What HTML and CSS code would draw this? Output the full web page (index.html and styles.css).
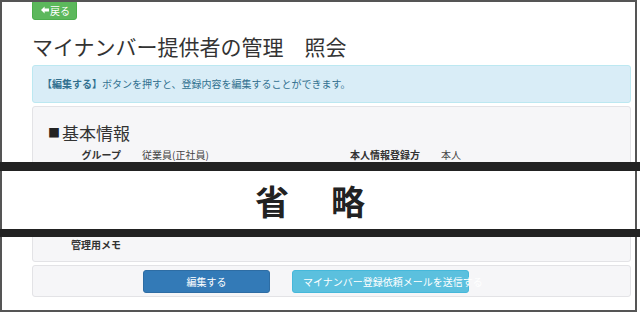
FILE: index.html
```html
<!DOCTYPE html>
<html lang="ja">
<head>
    <meta charset="UTF-8">
    <meta name="viewport" content="width=device-width, initial-scale=1.0">
    <title>マイナンバー提供者の管理 照会</title>
    <link rel="stylesheet" href="styles.css">
</head>
<body>
    <div class="frame">
        <div class="page">
            <a class="btn-back" href="#">
                <svg width="8" height="8" viewBox="0 0 8 8"><path d="M0 4 L3.6 0.4 L3.6 2.6 L8 2.6 L8 5.4 L3.6 5.4 L3.6 7.6 Z" fill="#fff"/></svg>戻る
            </a>
            <h1 class="title">マイナンバー提供者の管理　照会</h1>

            <div class="alert">
                <strong>【編集する】</strong>ボタンを押すと、登録内容を編集することができます。
            </div>

            <div class="panel">
                <h2 class="section">
                    <span class="mark">■</span>基本情報
                </h2>
                <div class="row">
                    <div class="label">グループ</div>
                    <div class="value">従業員(正社員)</div>
                    <div class="label">本人情報登録方</div>
                    <div class="value">本人</div>
                </div>
                <div class="row">
                    <div class="label">氏名</div>
                    <div class="value">山田 太郎</div>
                    <div class="label">氏名(カナ)</div>
                    <div class="value">ヤマダ タロウ</div>
                </div>
                <div class="row">
                    <div class="label">生年月日</div>
                    <div class="value">1980/01/01</div>
                    <div class="label">性別</div>
                    <div class="value">男性</div>
                </div>
                <div class="row">
                    <div class="label">メール</div>
                    <div class="value">yamada@example.com</div>
                    <div class="label">社員番号</div>
                    <div class="value">000123</div>
                </div>
                <div class="row">
                    <div class="label">住所</div>
                    <div class="value">東京都</div>
                    <div class="label">電話番号</div>
                    <div class="value">03-0000-0000</div>
                </div>
                <div class="row">
                    <div class="label">管理用メモ</div>
                    <div class="value"></div>
                </div>
            </div>

            <div class="panel actions">
                <button class="btn btn-primary">編集する</button>
                <button class="btn btn-info">マイナンバー登録依頼メールを送信する</button>
            </div>
        </div>
    </div>

    <div class="omit">
        <span class="omit-text">省　略</span>
    </div>
</body>
</html>
```

FILE: styles.css
```css
body {
    margin: 0;
    font-family: "Noto Sans CJK JP", "Noto Sans", sans-serif;
    background-color: #fff;
    color: #333;
}

.frame {
    position: relative;
    width: 637px;
    height: 312px;
    box-sizing: border-box;
    border: 2px solid #555;
    overflow: hidden;
}

.page {
    padding: 0 4px 0 30px;
}

.btn-back {
    display: flex;
    align-items: center;
    gap: 1px;
    width: fit-content;
    height: 20px;
    margin-top: -2px;
    padding: 0 6px 0 8px;
    box-sizing: border-box;
    background-color: #5cb85c;
    border: 1px solid #4cae4c;
    border-radius: 3px;
    color: #fff;
    font-size: 10px;
    text-decoration: none;
}

.title {
    margin: 13px 0 6px;
    font-size: 21px;
    line-height: 26px;
    font-weight: normal;
    color: #333;
}

.alert {
    margin-bottom: 3px;
    padding: 11px 9px;
    background-color: #d9edf7;
    border: 1px solid #bce8f1;
    border-radius: 3px;
    color: #31708f;
    font-size: 10px;
    line-height: 14px;
}

.panel {
    background-color: #f6f6f8;
    border: 1px solid #e3e3e6;
    border-radius: 3px;
    padding: 15px 15px 7px;
}

.section {
    margin: 0 0 2px;
    font-size: 17px;
    line-height: 22px;
    font-weight: normal;
    color: #333;
}

.section .mark {
    font-size: 12px;
    vertical-align: 2px;
    margin-right: 2px;
    color: #222;
}

.row {
    display: grid;
    grid-template-columns: 73px 184px 73px 1fr;
    column-gap: 21px;
    font-size: 10px;
    line-height: 18px;
    height: 18px;
}

.label {
    text-align: right;
    font-weight: bold;
    white-space: nowrap;
}

.value {
    color: #444;
    white-space: nowrap;
}

.actions {
    margin-top: 3px;
    padding: 4px 0 3px 110px;
    display: flex;
    gap: 22px;
}

.btn {
    height: 23px;
    padding: 0 10px;
    border-radius: 3px;
    color: #fff;
    font-family: inherit;
    font-size: 10px;
    white-space: nowrap;
    text-align: center;
    cursor: pointer;
}

.btn-primary {
    width: 127px;
    background-color: #337ab7;
    border: 1px solid #2e6da4;
}

.btn-info {
    width: 177px;
    text-align: left;
    background-color: #5bc0de;
    border: 1px solid #46b8da;
}

.omit {
    position: absolute;
    top: 162px;
    left: 0;
    width: 640px;
    height: 75px;
    box-sizing: border-box;
    border-top: 9px solid #222;
    border-bottom: 8px solid #222;
    background-color: #fff;
    box-shadow: inset 2px 0 0 #555, inset -3px 0 0 #fff, inset -5px 0 0 #555;
    display: flex;
    align-items: center;
    justify-content: center;
    padding-right: 16px;
}

.omit-text {
    font-size: 34px;
    font-weight: bold;
    letter-spacing: 4px;
    color: #222;
}
```
